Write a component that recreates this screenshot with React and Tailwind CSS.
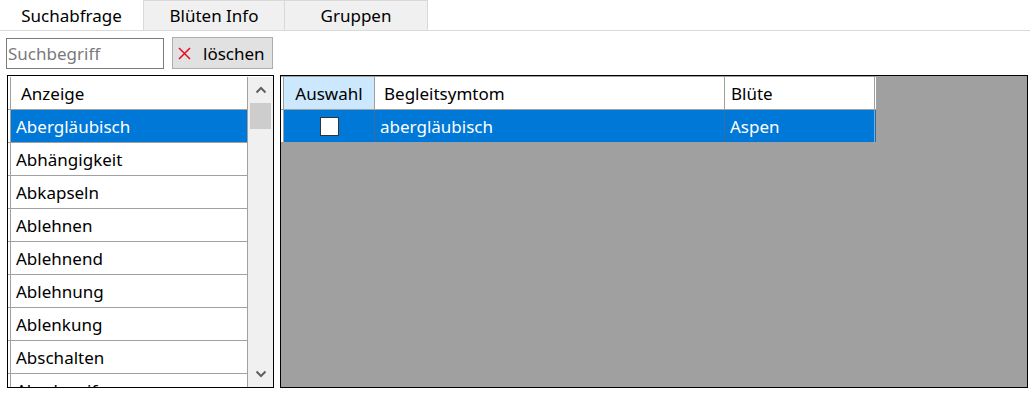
import React from "react";

const rows = [
  "Abergläubisch",
  "Abhängigkeit",
  "Abkapseln",
  "Ablehnen",
  "Ablehnend",
  "Ablehnung",
  "Ablenkung",
  "Abschalten",
  "Abschweifen",
];

function Chevron({ up }) {
  return (
    <svg width="12" height="8" viewBox="0 0 12 8" className="block">
      <path
        d={up ? "M1.5 6.5 L6 2 L10.5 6.5" : "M1.5 1.5 L6 6 L10.5 1.5"}
        fill="none"
        stroke="#606060"
        strokeWidth="2"
      />
    </svg>
  );
}

export default function App() {
  return (
    <div
      className="w-[1032px] h-[393px] bg-white overflow-hidden text-[17px] text-black"
      style={{ fontFamily: '"Noto Sans", "Open Sans", sans-serif' }}
    >
      {/* Tabs */}
      <div className="flex h-[31px] border-b border-[#dadada] mr-[2px]">
        <div className="w-[143px] flex items-center justify-center bg-white pt-[1px]">
          Suchabfrage
        </div>
        <div className="w-[142px] flex items-center justify-center bg-[#f0f0f0] border border-b-0 border-[#d9d9d9] pt-[1px]">
          Blüten Info
        </div>
        <div className="w-[143px] flex items-center justify-center bg-[#f0f0f0] border border-l-0 border-b-0 border-[#d9d9d9] pt-[1px]">
          Gruppen
        </div>
      </div>

      {/* Search row */}
      <div className="flex items-start pl-[6px] pt-[6px] gap-[8px] h-[44px]">
        <div className="w-[158px] h-[31px] mt-[1px] border border-[#7a7a7a] flex items-center pl-[1px] pt-[1px] text-[#7a7a7a] bg-white">
          Suchbegriff
        </div>
        <div className="w-[101px] h-[32px] border border-[#adadad] bg-[#e1e1e1] flex items-center pl-[5px] pt-[1px]">
          <svg width="13" height="13" viewBox="0 0 13 13" className="block">
            <path d="M1 1 L12 12 M12 1 L1 12" stroke="#e81123" strokeWidth="1.6" fill="none" />
          </svg>
          <span className="ml-[12px]">löschen</span>
        </div>
      </div>

      {/* Panels */}
      <div className="flex pl-[7px] gap-[6px] h-[313px]">
        {/* Left list */}
        <div className="w-[267px] h-full border border-black flex pt-[1px] bg-white">
          <div className="flex-1 flex flex-col overflow-hidden">
            <div className="flex h-[33px] shrink-0 border-b border-[#a0a0a0]">
              <div className="w-[3px] border-r border-[#a0a0a0]" />
              <div className="flex-1 flex items-center pl-[10px] pt-[2px] border-r border-[#a0a0a0]">
                Anzeige
              </div>
            </div>
            {rows.map((r, i) => (
              <div key={r} className="flex h-[33px] shrink-0 border-b border-[#a0a0a0]">
                <div className="w-[3px] border-r border-[#a0a0a0]" />
                <div
                  className={
                    i === 0
                      ? "flex-1 flex items-center pl-[5px] pt-[2px] bg-[#0078d7] text-white border-r border-[#a0a0a0]"
                      : "flex-1 flex items-center pl-[5px] pt-[2px] border-r border-[#a0a0a0]"
                  }
                >
                  {r}
                </div>
              </div>
            ))}
          </div>
          <div className="w-[25px] bg-[#f0f0f0] flex flex-col items-center">
            <div className="h-[26px] w-full flex items-center justify-center">
              <Chevron up />
            </div>
            <div className="w-[21px] h-[26px] bg-[#cdcdcd]" />
            <div className="flex-1" />
            <div className="h-[26px] w-full flex items-center justify-center">
              <Chevron />
            </div>
          </div>
        </div>

        {/* Right grid */}
        <div className="w-[748px] h-full border border-black bg-[#a0a0a0] pt-[1px]">
          <div className="flex h-[33px] w-[595px] bg-white border-b border-[#a0a0a0]">
            <div className="w-[3px] border-r border-[#a0a0a0]" />
            <div className="w-[91px] flex items-center justify-center pt-[2px] bg-[#cce8ff] border-r border-[#a0a0a0]">
              Auswahl
            </div>
            <div className="w-[350px] flex items-center pl-[9px] pt-[2px] border-r border-[#a0a0a0]">
              Begleitsymtom
            </div>
            <div className="w-[150px] flex items-center pl-[6px] pt-[2px] border-r border-[#a0a0a0]">
              Blüte
            </div>
          </div>
          <div className="flex h-[33px] w-[595px] bg-[#0078d7] text-white border-b border-[#a0a0a0]">
            <div className="w-[3px] bg-white border-r border-[#a0a0a0]" />
            <div className="w-[91px] flex items-center justify-center border-r border-[#3b6e9e]">
              <div className="w-[19px] h-[19px] bg-white border border-[#333333]" />
            </div>
            <div className="w-[350px] flex items-center pl-[5px] pt-[2px] border-r border-[#3b6e9e]">
              abergläubisch
            </div>
            <div className="w-[150px] flex items-center pl-[5px] pt-[2px] border-r border-[#a0a0a0]">
              Aspen
            </div>
          </div>
        </div>
      </div>
    </div>
  );
}
